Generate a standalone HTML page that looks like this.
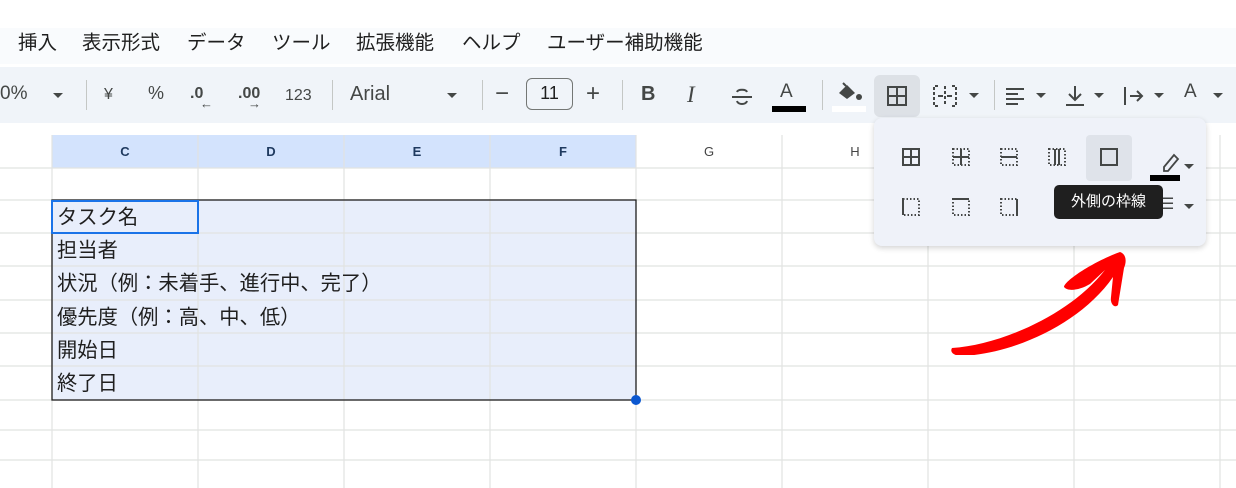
<!DOCTYPE html>
<html><head><meta charset="utf-8"><style>
body{margin:0;width:1236px;height:488px;overflow:hidden;background:#fff;font-family:"Liberation Sans","Noto Sans CJK JP",sans-serif;position:relative}
.a{position:absolute}
.menu span{position:absolute;top:26px;font-size:19.5px;color:#1f1f1f;white-space:nowrap}
.tb{position:absolute;top:67px;left:0;width:1236px;height:56px;background:#f0f4f9}
.t{position:absolute;top:83px;font-size:19px;color:#444746;white-space:nowrap}
.dd{position:absolute;top:93px;width:0;height:0;border-left:5px solid transparent;border-right:5px solid transparent;border-top:5px solid #444746}
.sep{position:absolute;top:80px;width:1px;height:30px;background:#c4c7c5}
.hdr{position:absolute;top:135px;height:33px;font-size:13px;font-weight:bold;color:#1f3a5f;text-align:center;line-height:33px}
.cell{position:absolute;left:57px;font-size:20.3px;color:#1f1f1f;white-space:nowrap}
.ic{position:absolute;font-size:16px;color:#444746}
</style></head><body>
<div class="a" style="top:28px;left:0;width:1236px;height:36px;background:#f9fbfd"></div>
<div class="menu">
<span style="left:18px">挿入</span><span style="left:82px">表示形式</span><span style="left:187px">データ</span><span style="left:272px">ツール</span><span style="left:356px">拡張機能</span><span style="left:462px">ヘルプ</span><span style="left:547px">ユーザー補助機能</span>
</div>
<div class="tb"></div>
<div class="t" style="left:0">0%</div><div class="dd" style="left:53px"></div>
<div class="sep" style="left:86px"></div>
<div class="t" style="left:104px;font-size:16px;top:86px">¥</div>
<div class="t" style="left:148px;font-size:18px">%</div>
<div class="t" style="left:190px;font-size:16px;font-weight:bold;top:85px">.0</div><div class="t" style="left:200px;font-size:13px;top:96px">←</div>
<div class="t" style="left:238px;font-size:16px;font-weight:bold;top:85px">.00</div><div class="t" style="left:248px;font-size:13px;top:96px">→</div>
<div class="t" style="left:285px;font-size:16px;top:87px">123</div>
<div class="sep" style="left:332px"></div>
<div class="t" style="left:350px;font-size:20px">Arial</div><div class="dd" style="left:447px"></div>
<div class="sep" style="left:482px"></div>
<div class="t" style="left:495px;font-size:24px;top:80px">−</div>
<div class="a" style="left:526px;top:78px;width:47px;height:32px;border:1.5px solid #747775;border-radius:6px;box-sizing:border-box;text-align:center;font-size:18px;line-height:29px;color:#1f1f1f">11</div>
<div class="t" style="left:586px;font-size:24px;top:80px">+</div>
<div class="sep" style="left:622px"></div>
<div class="t" style="left:641px;font-weight:bold;font-size:20px">B</div>
<div class="t" style="left:687px;font-style:italic;font-family:'Liberation Serif',serif;font-size:23px;top:82px">I</div>
<svg class="a" style="left:730px;top:85px" width="24" height="24" fill="none" stroke="#444746" stroke-width="2"><path d="M2 12h20M7 7c1-3 9-3 10 0M7 16c1 4 9 4 10 0"/></svg>
<div class="t" style="left:780px;top:81px">A</div><div class="a" style="left:772px;top:106px;width:34px;height:6px;background:#000"></div>
<div class="sep" style="left:822px"></div>
<svg class="a" style="left:836px;top:82px" width="28" height="22" fill="#444746"><path d="M3 11l8-8 8 8-8 6z"/><path d="M7 1l3 3" stroke="#444746" stroke-width="2"/><circle cx="23" cy="15" r="3"/></svg>
<div class="a" style="left:832px;top:106px;width:34px;height:6px;background:#fff"></div>
<div class="a" style="left:874px;top:75px;width:46px;height:42px;background:#dde1e6;border-radius:6px"></div>
<svg class="a" style="left:886px;top:85px" width="22" height="22"><rect x="2" y="2" width="18" height="18" fill="none" stroke="#444746" stroke-width="2"/><path d="M11 2v18M2 11h18" stroke="#444746" stroke-width="2"/></svg>
<svg class="a" style="left:932px;top:84px" width="26" height="24" fill="none" stroke="#444746" stroke-width="2"><path d="M6 2H2v20h4M20 2h4v20h-4M13 2v20" stroke-dasharray="3 2"/><path d="M6 12h5M20 12h-5"/></svg><div class="dd" style="left:969px"></div>
<div class="sep" style="left:994px"></div>
<svg class="a" style="left:1004px;top:86px" width="22" height="22" stroke="#444746" stroke-width="2"><path d="M2 3h18M2 8h12M2 13h18M2 18h12"/></svg><div class="dd" style="left:1036px"></div>
<svg class="a" style="left:1064px;top:84px" width="22" height="24" fill="none" stroke="#444746" stroke-width="2"><path d="M11 2v14M5 10l6 6 6-6M2 21h18"/></svg><div class="dd" style="left:1094px"></div>
<svg class="a" style="left:1122px;top:85px" width="24" height="22" fill="none" stroke="#444746" stroke-width="2"><path d="M3 2v18M8 11h12M15 6l5 5-5 5"/></svg><div class="dd" style="left:1154px"></div>
<div class="t" style="left:1184px;top:81px">A</div><div class="dd" style="left:1213px"></div>

<svg class="a" style="left:0;top:0" width="1236" height="488">
<rect x="52" y="135" width="584" height="33" fill="#d3e3fd"/>
<rect x="52" y="200" width="584" height="200" fill="#e8eefb"/>
<g stroke="#e1e3e1" stroke-width="1.2">
<path d="M52 135V488M198 135V488M344 135V488M490 135V488M636 135V488M782 135V488M928 135V488M1074 135V488M1220 135V488"/>
<path d="M0 168H1236M0 200H1236M0 233H1236M0 266H1236M0 300H1236M0 333H1236M0 366H1236M0 400H1236M0 430H1236M0 460H1236"/>
</g>
<rect x="52" y="200" width="584" height="200" fill="none" stroke="#1f1f1f" stroke-width="1.3"/>
<rect x="52" y="201" width="146" height="32" fill="none" stroke="#1a73e8" stroke-width="2"/>
<circle cx="636" cy="400" r="5" fill="#0b57d0"/>
</svg>
<div class="hdr" style="left:52px;width:146px">C</div>
<div class="hdr" style="left:198px;width:146px">D</div>
<div class="hdr" style="left:344px;width:146px">E</div>
<div class="hdr" style="left:490px;width:146px">F</div>
<div class="hdr" style="left:636px;width:146px;font-weight:normal;color:#444">G</div>
<div class="hdr" style="left:782px;width:146px;font-weight:normal;color:#444">H</div>
<div class="cell" style="top:200px">タスク名</div>
<div class="cell" style="top:233px">担当者</div>
<div class="cell" style="top:266px">状況（例：未着手、進行中、完了）</div>
<div class="cell" style="top:300px">優先度（例：高、中、低）</div>
<div class="cell" style="top:333px">開始日</div>
<div class="cell" style="top:366px">終了日</div>

<div class="a" style="left:874px;top:118px;width:332px;height:128px;background:#eff2f9;border-radius:8px;box-shadow:0 2px 6px rgba(0,0,0,.18)"></div>
<div class="a" style="left:1086px;top:135px;width:46px;height:46px;background:#dfe3ea;border-radius:4px"></div>
<svg class="a" style="left:874px;top:118px" width="332" height="128" fill="none" stroke="#444746" stroke-width="2">
<rect x="29" y="31" width="16" height="16"/><path d="M37 31v16M29 39h16"/>
<g stroke-dasharray="1.5 2"><rect x="79" y="31" width="16" height="16"/><rect x="127" y="31" width="16" height="16"/><rect x="175" y="31" width="16" height="16"/><rect x="227" y="31" width="16" height="16"/></g>
<path d="M87 31v16M79 39h16M127 39h16M181 31v16M185 31v16"/>
<path d="M227 31h16v16h-16z"/>
<g stroke-dasharray="1.5 2"><rect x="29" y="81" width="16" height="16"/><rect x="79" y="81" width="16" height="16"/><rect x="127" y="81" width="16" height="16"/></g>
<path d="M29 81v16M79 81h16M143 81v16"/>
<path d="M290 49l10-12 4 4-10 12h-4z" stroke-width="1.8"/>
</svg>
<div class="a" style="left:1150px;top:175px;width:30px;height:6px;background:#000"></div>
<div class="dd" style="left:1184px;top:164px"></div>
<div class="dd" style="left:1184px;top:204px"></div>
<div class="ic" style="left:1160px;top:194px">☰</div>
<div class="a" style="left:1054px;top:185px;width:109px;height:34px;background:#1f1f1f;border-radius:5px;color:#fff;font-size:15px;line-height:34px;text-align:center">外側の枠線</div>

<svg class="a" style="left:940px;top:205px" width="200" height="150">
<path d="M12 143 C60 140 130 110 165 65 L150 79 C140 85 128 87 124 82 C125 75 155 56 180 47 C186 49 187 56 184 63 L178 100 C174 104 170 98 171 92 L173 72 C140 120 70 150 20 151 C12 150 10 146 12 143Z" fill="#ff0000"/>
</svg>
</body></html>
